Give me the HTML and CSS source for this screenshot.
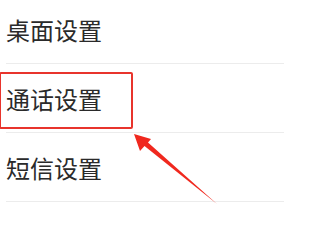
FILE: index.html
```html
<!DOCTYPE html>
<html lang="zh-CN">
<head>
<meta charset="utf-8">
<link rel="stylesheet" href="styles.css">
</head>
<body>
<div class="screen">
  <ul class="list">
    <li class="row">桌面设置</li>
    <li class="row">通话设置</li>
    <li class="row">短信设置</li>
  </ul>
  <div class="highlight"></div>
  <svg class="arrow" width="284" height="215" viewBox="0 0 284 215">
    <polygon points="134,134 151,139 148,142.5 217,204 144.5,146 140,151" fill="#f0281e"/>
  </svg>
</div>
</body>
</html>
```
FILE: styles.css
```css
html, body {
  margin: 0;
  padding: 0;
  background: #ffffff;
}
.screen {
  position: relative;
  width: 284px;
  height: 215px;
  overflow: hidden;
  background: #ffffff;
}
.list {
  list-style: none;
  margin: -5px 0 0 0;
  padding: 0;
}
.row {
  display: flex;
  align-items: center;
  height: 68px;
  margin-left: 6px;
  border-bottom: 1px solid #ececec;
  font-family: "Noto Sans CJK SC", "Noto Sans", sans-serif;
  font-size: 24px;
  color: #2a2a2a;
  padding-left: 0;
}
.highlight {
  position: absolute;
  left: -1px;
  top: 72px;
  width: 130px;
  height: 53px;
  border: 2px solid #e8342c;
  border-radius: 2px;
}
.arrow {
  position: absolute;
  left: 0;
  top: 0;
}
```
